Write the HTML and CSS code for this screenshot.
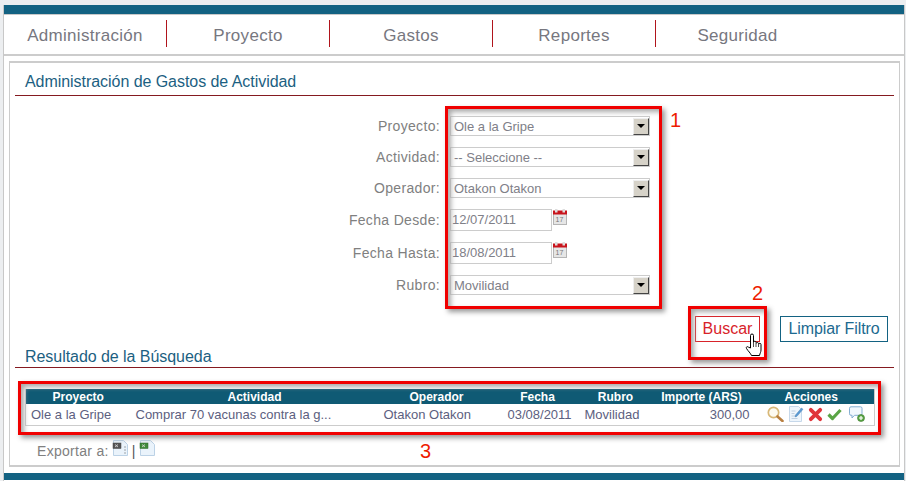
FILE: index.html
```html
<!DOCTYPE html>
<html lang="es">
<head>
    <meta charset="UTF-8">
    <title>Administración de Gastos de Actividad</title>
    <link rel="stylesheet" href="styles.css">
</head>
<body>
<div class="page">
    <div class="top-bar"></div>
    <ul class="nav">
        <li>Administración</li>
        <li>Proyecto</li>
        <li>Gastos</li>
        <li>Reportes</li>
        <li class="last">Seguridad</li>
    </ul>

    <div class="panel">
        <h2 class="title">Administración de Gastos de Actividad</h2>

        <div class="filter">
            <label>Proyecto:</label>
            <div class="combo"><span>Ole a la Gripe</span><i class="arrow"></i></div>
            <label>Actividad:</label>
            <div class="combo"><span>-- Seleccione --</span><i class="arrow"></i></div>
            <label>Operador:</label>
            <div class="combo"><span>Otakon Otakon</span><i class="arrow"></i></div>
            <label>Fecha Desde:</label>
            <div class="date-row">
                <input class="date" type="text" value="12/07/2011">
                <svg class="cal" width="14" height="16" viewBox="0 0 14 16"><rect x="0.5" y="3" width="13" height="12.5" fill="#e6e6e6" stroke="#b5b5b5"/><rect y="1.5" width="14" height="4" fill="#c8141c"/><rect x="2" y="0" width="2.5" height="3.5" fill="#ddd"/><rect x="9.5" y="0" width="2.5" height="3.5" fill="#ddd"/><text x="2.5" y="12.5" font-size="7" font-family="Liberation Sans" fill="#777">17</text></svg>
            </div>
            <label>Fecha Hasta:</label>
            <div class="date-row">
                <input class="date" type="text" value="18/08/2011">
                <svg class="cal" width="14" height="16" viewBox="0 0 14 16"><rect x="0.5" y="3" width="13" height="12.5" fill="#e6e6e6" stroke="#b5b5b5"/><rect y="1.5" width="14" height="4" fill="#c8141c"/><rect x="2" y="0" width="2.5" height="3.5" fill="#ddd"/><rect x="9.5" y="0" width="2.5" height="3.5" fill="#ddd"/><text x="2.5" y="12.5" font-size="7" font-family="Liberation Sans" fill="#777">17</text></svg>
            </div>
            <label>Rubro:</label>
            <div class="combo"><span>Movilidad</span><i class="arrow"></i></div>
        </div>

        <div class="actions">
            <button class="btn btn-hover">Buscar</button>
            <button class="btn btn-clear">Limpiar Filtro</button>
        </div>

        <h2 class="title title-result">Resultado de la Búsqueda</h2>

        <table class="grid">
            <colgroup>
                <col class="c1"><col class="c2"><col class="c3"><col class="c4"><col class="c5"><col class="c6"><col class="c7">
            </colgroup>
            <thead>
                <tr>
                    <th>Proyecto</th>
                    <th>Actividad</th>
                    <th>Operador</th>
                    <th>Fecha</th>
                    <th>Rubro</th>
                    <th>Importe (ARS)</th>
                    <th class="head-actions">Acciones</th>
                </tr>
            </thead>
            <tbody>
                <tr>
                    <td>Ole a la Gripe</td>
                    <td>Comprar 70 vacunas contra la g...</td>
                    <td>Otakon Otakon</td>
                    <td class="center">03/08/2011</td>
                    <td class="tight">Movilidad</td>
                    <td class="num">300,00</td>
                    <td class="icons">
                        <svg width="17" height="16" viewBox="0 0 17 16"><circle cx="6.5" cy="6.5" r="5.2" fill="#fdfaf0" stroke="#d8b878" stroke-width="1.7"/><path d="M10.5 10.5 15.5 15" stroke="#b87f40" stroke-width="2.6" stroke-linecap="round"/></svg>
                        <svg width="16" height="16" viewBox="0 0 16 16"><path d="M1.5 .5h9l3 3v12h-12z" fill="#eef5fb" stroke="#c6d8ea"/><path d="M3.500 5h4M3.500 7.500h3M3.500 10h5M3.500 12.500h6" stroke="#c0d0e0"/><path d="M7.500 9 13.500 2 15 3.300l-6 7-2 .6z" fill="#5a9ad4" stroke="#3f78ac" stroke-width=".4"/></svg>
                        <svg width="15" height="15" viewBox="0 0 15 15"><path d="M2.800 2.800 12.200 12.200M12.200 2.800 2.800 12.200" stroke="#e0343a" stroke-width="3.800" stroke-linecap="round"/></svg>
                        <svg width="15" height="13" viewBox="0 0 15 13"><path d="M1.500 6.500 5.500 10.500 13.500 2" fill="none" stroke="#5aa545" stroke-width="3.200" stroke-linejoin="round"/></svg>
                        <svg width="16" height="16" viewBox="0 0 16 16"><path d="M2 .8h9.500a1.500 1.500 0 0 1 1.500 1.500v5.500a1.500 1.500 0 0 1-1.500 1.500h-6l-2.500 2.700v-2.700h-1a1.500 1.500 0 0 1-1.500-1.500v-5.500a1.500 1.500 0 0 1 1.500-1.500z" fill="#f2f8fd" stroke="#84aed2"/><circle cx="12" cy="12" r="3.500" fill="#5aa545" stroke="#3b7a2a" stroke-width=".6"/><path d="M10 12h4M12 10v4" stroke="#fff" stroke-width="1.200"/></svg>
                    </td>
                </tr>
            </tbody>
        </table>

        <div class="export">
            <span>Exportar a:</span>
            <svg class="file" width="17" height="16" viewBox="0 0 17 16"><path d="M1.500 .5h10l4 4v11h-14z" fill="#eaf3fb" stroke="#bcd2e6"/><rect x="1" y="3" width="8" height="5.500" fill="#555" stroke="#444" stroke-width=".5"/><path d="M3 4.500l3 2.500M6 4.500l-3 2.500" stroke="#ddd" stroke-width=".8"/><path d="M13 6.500v1M13 9.500v1M13 12.500v1" stroke="#555"/></svg>
            <span class="pipe">|</span>
            <svg class="file" width="17" height="16" viewBox="0 0 17 16"><path d="M1.500 .5h10l4 4v11h-14z" fill="#eaf3fb" stroke="#bcd2e6"/><rect x="1" y="3" width="8" height="5.500" fill="#3f8a3c" stroke="#2b6a2a" stroke-width=".5"/><path d="M3 4.500l3 2.500M6 4.500l-3 2.500" stroke="#ddd" stroke-width=".8"/></svg>
        </div>
    </div>

    <div class="bottom-bar"></div>

    <div class="mark mark-1"></div>
    <div class="mark mark-2"></div>
    <div class="mark mark-3"></div>
    <span class="num-mark n1">1</span>
    <span class="num-mark n2">2</span>
    <span class="num-mark n3">3</span>
    <svg class="hand" width="18" height="24" viewBox="0 0 18 24"><path d="M5.500 15V2.500a1.500 1.500 0 0 1 3 0V9.500a1.300 1.300 0 0 1 2.600 0v1a1.300 1.300 0 0 1 2.500 0v1a1.200 1.200 0 0 1 2.400 0v5.500c0 2-1 3-1.500 5.500H6.500C5.500 20 3 18 1.500 15.500c-.8-1.500 .8-2.500 2-1.300z" fill="#fff" stroke="#000"/><path d="M8.500 10v4M11 11v3M13.500 12v2" stroke="#000" stroke-width=".7"/></svg>
</div>
</body>
</html>
```
FILE: styles.css
```css
* {
    box-sizing: border-box;
}
body {
    margin: 0;
    background-color: #eceef0;
    font-family: "Liberation Sans", Arial, sans-serif;
    color: #777;
}
.page {
    position: relative;
    width: 902px;
    height: 476px;
    margin: 5px 0 0 3px;
    background: #fff;
    border-left: 1px solid #c8c8c8;
    border-right: 1px solid #c8c8c8;
}
.top-bar {
    height: 9px;
    background: #136282;
}
.bottom-bar {
    height: 7px;
    margin-top: 6px;
    background: #136282;
}
.nav {
    display: flex;
    height: 42px;
    margin: 0;
    padding: 5px 0 7px;
    list-style: none;
    border-top: 1px solid #c8c8c8;
    border-bottom: 2px solid #cccccc;
}
.nav li {
    width: 163px;
    line-height: 31px;
    font-size: 17px;
    letter-spacing: .3px;
    text-align: center;
    color: #77777f;
    border-right: 1px solid #b0141c;
}
.nav li.last {
    border-right: none;
}
.panel {
    height: 406px;
    margin: 5px 4px 0 5px;
    padding: 0 5px;
    border: 1px solid #cccccc;
    border-width: 2px 1px 2px 1px;
}
.title {
    height: 33px;
    margin: 0;
    padding: 8px 0 0 10px;
    font-size: 16px;
    font-weight: normal;
    line-height: 22px;
    letter-spacing: -.05px;
    color: #1c5f82;
    border-bottom: 1px solid #851a20;
}
.title-result {
    height: 26px;
    padding-top: 4px;
}
.filter {
    display: grid;
    grid-template-columns: 425px 1fr;
    column-gap: 10px;
    row-gap: 11px;
    margin-top: 20px;
    align-items: center;
}
.filter label {
    font-size: 14px;
    letter-spacing: .33px;
    text-align: right;
    color: #808080;
}
.combo {
    display: flex;
    align-items: center;
    justify-content: space-between;
    width: 200px;
    height: 20px;
    padding-left: 3px;
    font-size: 13px;
    color: #808088;
    border: 1px solid #cccccc;
    background: #fff;
}
.arrow {
    position: relative;
    width: 16px;
    height: 17px;
    background: #d6d2c8;
    border: 1px solid;
    border-color: #eee #444 #444 #eee;
}
.arrow::after {
    content: "";
    position: absolute;
    left: 3px;
    top: 5px;
    border: 4px solid transparent;
    border-top: 4px solid #000;
}
.date-row {
    display: flex;
    gap: 1px;
    height: 22px;
}
.date {
    width: 102px;
    height: 22px;
    padding: 0 1px 2px;
    font-family: inherit;
    font-size: 13px;
    color: #808088;
    border: 1px solid #cccccc;
    outline: none;
}
.actions {
    display: flex;
    justify-content: flex-end;
    gap: 20px;
    margin-top: 21px;
    padding-right: 6px;
}
.btn {
    height: 26px;
    padding: 0;
    font-family: inherit;
    font-size: 16px;
    color: #1c6a90;
    background: #fff;
    border: 1px solid #136282;
}
.btn-clear {
    width: 108px;
    letter-spacing: -.1px;
}
.btn-hover {
    width: 65px;
    color: #d8232a;
    border-color: #d8232a;
}
.grid {
    width: 849px;
    margin: 21px 0 0 10px;
    border-collapse: collapse;
    table-layout: fixed;
    font-size: 13px;
    border: 1px solid #cccccc;
    border-top: none;
}
.c1 { width: 105px; }
.c2 { width: 248px; }
.c3 { width: 116px; }
.c4 { width: 86px; }
.c5 { width: 70px; }
.c6 { width: 102px; }
.c7 { width: 122px; }
.grid th {
    height: 15px;
    padding: 0;
    font-size: 12px;
    font-weight: bold;
    color: #fff;
    background: #0f5a74;
}
.grid th.head-actions {
    padding-right: 4px;
}
.grid td {
    height: 21px;
    padding: 0 0 0 5px;
    color: #5c6080;
    white-space: nowrap;
}
.grid td.center {
    padding-left: 13px;
}
.grid td.tight {
    padding-left: 4px;
}
.grid td.num {
    padding: 0 3px 0 0;
    text-align: right;
}
.grid td.icons {
    padding-left: 14px;
    font-size: 0;
}
.icons svg {
    margin-right: 4px;
    vertical-align: middle;
}
.icons svg:nth-child(4) {
    margin-right: 7px;
}
.export {
    display: flex;
    align-items: flex-start;
    gap: 3px;
    margin: 16px 0 0 22px;
    font-size: 14px;
    letter-spacing: .3px;
    color: #808080;
}
.export span {
    line-height: 18px;
}
.file {
    margin-top: -2px;
}
.pipe {
    color: #555;
}
.mark {
    position: absolute;
    border: 3px solid #f00000;
    box-shadow: 3px 3px 5px #999, inset 3px 3px 5px #aaa;
}
.mark-1 {
    left: 441px;
    top: 101px;
    width: 217px;
    height: 203px;
}
.mark-2 {
    left: 684px;
    top: 301px;
    width: 79px;
    height: 54px;
}
.mark-3 {
    left: 14px;
    top: 376px;
    width: 863px;
    height: 54px;
}
.num-mark {
    position: absolute;
    font-size: 20px;
    line-height: 20px;
    color: #ee1c00;
}
.n1 { left: 666px; top: 105px; }
.n2 { left: 748px; top: 278px; }
.n3 { left: 416px; top: 436px; }
.hand {
    position: absolute;
    left: 741px;
    top: 328px;
}
```
